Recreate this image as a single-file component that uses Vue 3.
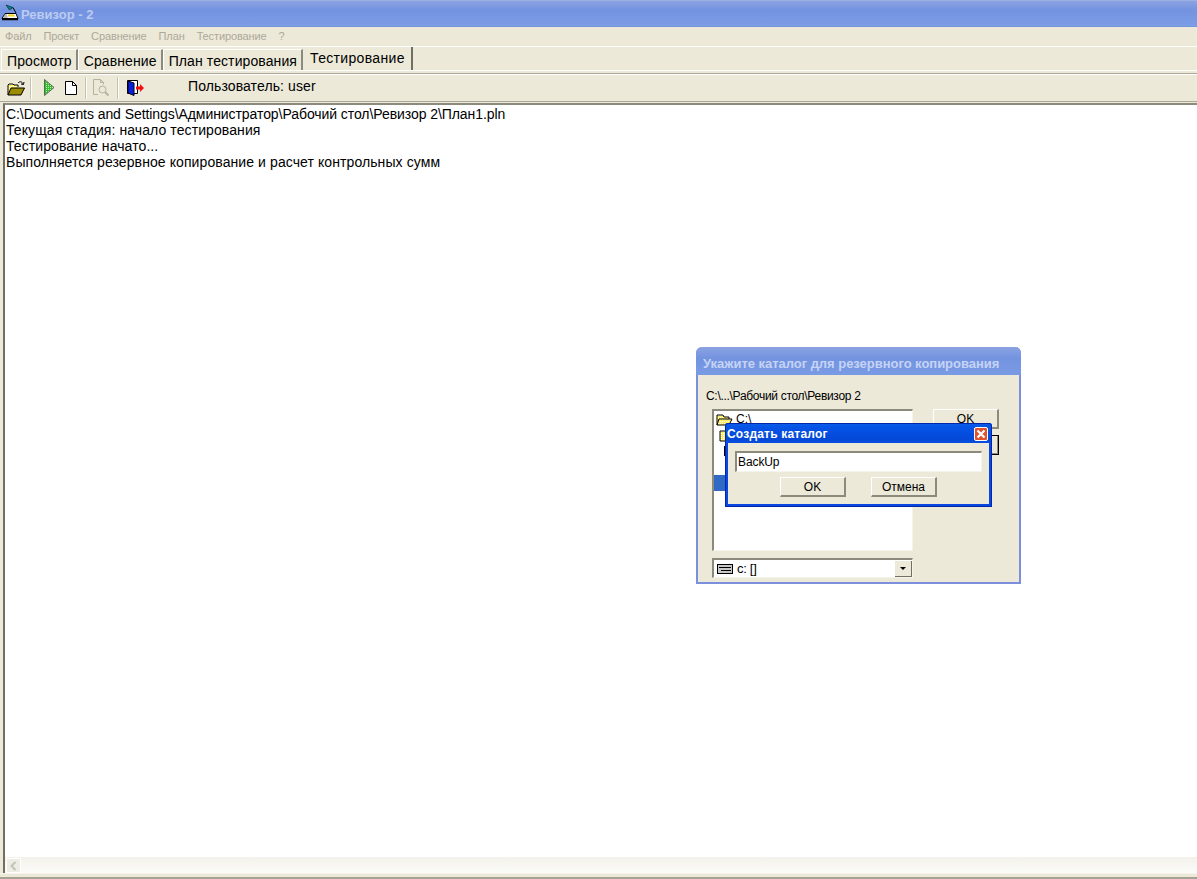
<script setup>
const menus = ['Файл', 'Проект', 'Сравнение', 'План', 'Тестирование', '?']
const tabs = ['Просмотр', 'Сравнение', 'План тестирования']
const lines = [
  'C:\\Documents and Settings\\Администратор\\Рабочий стол\\Ревизор 2\\План1.pln',
  'Текущая стадия: начало тестирования',
  'Тестирование начато...',
  'Выполняется резервное копирование и расчет контрольных сумм',
]
</script>

<template>
  <div class="app">
    <header class="titlebar">
      <svg class="app-icon" width="18" height="18" viewBox="0 0 18 18">
        <path d="M5 1l7 2.500-3.500 2.500z" fill="#0a8080" stroke="#033" stroke-width=".7"/>
        <path d="M12 3.500l3 5.500" stroke="#000" stroke-width="1" fill="none"/>
        <path d="M4 9.500h11l2 5H1z" fill="#fff" stroke="#000"/>
        <path d="M7 10.500h6l1 2H7z" fill="#f0d020"/>
        <path d="M3 11h3M2.500 13h4" stroke="#777"/>
        <path d="M1 15.500h16" stroke="#000" stroke-width="1.500"/>
      </svg>
      <span class="title-text">Ревизор - 2</span>
    </header>

    <nav class="menubar">
      <span v-for="m in menus" :key="m" class="menu-item">{{ m }}</span>
    </nav>

    <div class="tabstrip">
      <div v-for="t in tabs" :key="t" class="tab">{{ t }}</div>
      <div class="tab tab-active">Тестирование</div>
    </div>

    <div class="toolbar">
      <svg class="tool tool-open" width="18" height="16" viewBox="0 0 18 16">
        <defs>
          <pattern id="dy" width="2" height="2" patternUnits="userSpaceOnUse">
            <rect width="2" height="2" fill="#fff060"/><rect width="1" height="1" fill="#fff"/>
          </pattern>
        </defs>
        <path d="M1 15V5l1-1h4l1 1h4v2" fill="url(#dy)" stroke="#000"/>
        <path d="M1 15l3-7h13.500l-3.500 7z" fill="#9c8c00" stroke="#000"/>
        <path d="M11 3c2-2 4-1.500 5 1M16.500 4.500l-2.500-.5M16.500 4.500l.5-2.500" fill="none" stroke="#000"/>
      </svg>
      <span class="sep sep-a"></span>
      <svg class="tool tool-play" width="11" height="17" viewBox="0 0 11 17">
        <defs>
          <pattern id="dg" width="2" height="2" patternUnits="userSpaceOnUse">
            <rect width="2" height="2" fill="#30c030"/><rect width="1" height="1" fill="#d0f0b0"/>
          </pattern>
        </defs>
        <path d="M.5.500l9.500 8-9.500 8z" fill="url(#dg)" stroke="#586858"/>
      </svg>
      <svg class="tool tool-new" width="12" height="14" viewBox="0 0 12 14">
        <path d="M.5.500h7l4 4v9H.5z" fill="#fff" stroke="#000"/>
        <path d="M7.500.500v4h4" fill="none" stroke="#000"/>
      </svg>
      <span class="sep sep-b"></span>
      <svg class="tool tool-find" width="17" height="17" viewBox="0 0 17 17">
        <path d="M5 15.500H.5V.500h7l3 3v2M7.500.500v3h3" fill="none" stroke="#b5b29e"/>
        <circle cx="9.500" cy="10.500" r="3.500" fill="#ece9d8" stroke="#b5b29e"/>
        <path d="M12 13l3.500 3.500" stroke="#b5b29e" stroke-width="2"/>
      </svg>
      <span class="sep sep-c"></span>
      <svg class="tool tool-exit" width="17" height="16" viewBox="0 0 17 16">
        <path d="M.5.500h10v13H.5z" fill="#fff" stroke="#000"/>
        <path d="M1 1l6 2v12.500l-6-2.500z" fill="#0a1ee0" stroke="#000"/>
        <path d="M9 6.500h4V4l4 4-4 4V9.500H9z" fill="#f01010"/>
      </svg>
      <span class="user-label">Пользователь: user</span>
    </div>

    <main class="log">
      <div v-for="l in lines" :key="l" class="log-line">{{ l }}</div>
    </main>

    <div class="hscroll">
      <div class="scroll-btn">
        <svg width="7" height="10" viewBox="0 0 7 10"><path d="M5.500 1l-4 4 4 4" fill="none" stroke="#c4c3b8" stroke-width="2"/></svg>
      </div>
    </div>
    <div class="bottom-edge"></div>

    <section class="dlg-backup">
      <div class="backup-title">Укажите каталог для резервного копирования</div>
      <div class="backup-body">
        <div class="path-label">C:\...\Рабочий стол\Ревизор 2</div>
        <div class="backup-main">
          <div class="left-col">
            <div class="tree">
              <div class="tree-row tree-row-root">
                <svg width="17" height="13" viewBox="0 0 17 13"><path d="M1 12V2h6l1 2h5v2M1 12l2-6h13l-3 6z" fill="url(#dy)" stroke="#000"/></svg>
                <span>C:\</span>
              </div>
              <div class="tree-row tree-row-sub">
                <svg width="14" height="13" viewBox="0 0 14 13"><path d="M1 12V2h6l1 2h5v8z" fill="url(#dy)" stroke="#000"/></svg>
              </div>
              <div class="tree-row tree-row-third"><span class="tick"></span></div>
              <div class="tree-sel"></div>
            </div>
            <div class="combo">
              <svg width="16" height="10" viewBox="0 0 16 10"><rect x=".5" y=".5" width="15" height="9" fill="#c8c8c8" stroke="#000"/><path d="M2 3.500h12M4 6.500h10" stroke="#000"/></svg>
              <span class="combo-text">c: []</span>
              <span class="combo-btn"><i class="arrow"></i></span>
            </div>
          </div>
          <div class="right-col">
            <div class="btn3d btn-ok-back">OK</div>
            <div class="btn3d btn-cancel-back"></div>
          </div>
        </div>
      </div>
    </section>

    <section class="dlg-create">
      <div class="create-title">
        <span>Создать каталог</span>
        <span class="close-x">
          <svg width="10" height="10" viewBox="0 0 10 10"><path d="M1.500 1.500l7 7M8.500 1.500l-7 7" stroke="#fff" stroke-width="2.200"/></svg>
        </span>
      </div>
      <div class="create-body">
        <div class="create-input">BackUp</div>
        <div class="create-actions">
          <div class="btn3d btn-dlg">OK</div>
          <div class="btn3d btn-dlg">Отмена</div>
        </div>
      </div>
    </section>
  </div>
</template>

<style>
html, body { margin: 0; padding: 0; background: #ece9d8; overflow: hidden; }
</style>

<style scoped>
.app {
  position: relative;
  width: 1197px;
  height: 879px;
  display: flex;
  flex-direction: column;
  overflow: hidden;
  background: #ece9d8;
  font-family: "Liberation Sans", Arial, sans-serif;
  color: #000;
}
.titlebar {
  height: 27px;
  box-sizing: border-box;
  flex: none;
  display: flex;
  align-items: center;
  padding: 0 0 0 1px;
  border-top: 1px solid #9db0e4;
  background: linear-gradient(to bottom, #8ba2e2 0%, #7393e0 35%, #7a9be4 85%, #7d9fe6 95%, #6f8cd8 100%);
}
.app-icon { flex: none; margin-right: 2px; margin-top: -2px; }
.title-text {
  font-weight: 700;
  font-size: 13px;
  color: #bccbf3;
}
.menubar {
  height: 19px;
  flex: none;
  display: flex;
  align-items: center;
  padding: 0 0 1px 5px;
  gap: 12px;
  font-size: 11px;
  letter-spacing: -.12px;
  color: #aca899;
  box-sizing: border-box;
}
.tabstrip {
  height: 25px;
  flex: none;
  box-sizing: border-box;
  display: flex;
  align-items: flex-end;
  border-top: 1px solid #fff;
  padding: 0 0 0 1px;
  border-bottom: 1px solid #fff;
}
.tab {
  height: 21px;
  box-sizing: border-box;
  padding: 2px 4px 0 5px;
  font-size: 14px;
  line-height: 18px;
  border-top: 1px solid #fff;
  border-left: 1px solid #fff;
  border-right: 2px solid #8c8a7c;
  letter-spacing: .1px;
}
.tab-active {
  height: 23px;
  padding: 2px 6px 0 7px;
  border-left: none;
  border-top: none;
  border-right: 2px solid #716f64;
  letter-spacing: .33px;
  background: #ece9d8;
}
.toolbar {
  height: 29px;
  margin-top: 2px;
  flex: none;
  box-sizing: border-box;
  display: flex;
  align-items: center;
  border-top: 1px solid #aca899;
  border-bottom: 1px solid #aca899;
  box-shadow: inset 0 1px 0 #fff;
  padding: 0 0 0 7px;
}
.tool { flex: none; }
.sep { flex: none; width: 1px; height: 22px; background: #c5c2b0; border-right: 1px solid #fff; }
.sep-a { margin: 0 12px 0 5px; }
.tool-new { margin-left: 10px; }
.sep-b { margin: 0 6px 0 8px; }
.sep-c { margin: 0 8px 0 7px; }
.user-label { margin-left: 44px; font-size: 14px; letter-spacing: .1px; margin-top: -3px; }
.log {
  flex: 1;
  min-height: 0;
  box-sizing: border-box;
  margin: 1px 0 0 3px;
  padding: 1px 0 0 1px;
  background: #fff;
  border-left: 2px solid #716f64;
  border-top: 2px solid #8c8a7c;
  font-size: 14px;
  letter-spacing: .09px;
  line-height: 16px;
}
.log-line:first-child { letter-spacing: -.07px; }
.hscroll {
  height: 16px;
  flex: none;
  margin-left: 3px;
  background: linear-gradient(to bottom, #f3f1ea, #fbfbf9);
  display: flex;
  border-left: 2px solid #716f64;
}
.scroll-btn {
  width: 15px;
  height: 15px;
  margin: 1px 0 0 1px;
  box-sizing: border-box;
  border: 1px solid #fff;
  background: #eeede5;
  display: flex;
  align-items: center;
  justify-content: center;
}
.bottom-edge {
  height: 6px;
  flex: none;
  box-sizing: border-box;
  background: #ece9d8;
  border-top: 1px solid #f5f4e8;
  border-bottom: 2px solid #a4a294;
}
.dlg-backup {
  position: absolute;
  left: 696px;
  top: 347px;
  width: 325px;
  height: 237px;
  box-sizing: border-box;
  border: 2px solid #7c8fdc;
  border-top: none;
  border-radius: 6px 6px 0 0;
  background: #ece9d8;
  display: flex;
  flex-direction: column;
}
.backup-title {
  height: 28px;
  flex: none;
  margin: 0 -2px;
  padding: 4px 0 0 7px;
  display: flex;
  align-items: center;
  box-sizing: border-box;
  border-radius: 6px 6px 0 0;
  background: linear-gradient(to bottom, #8ba2e2, #7393e0 40%, #7a9be4);
  color: #c5d3f5;
  font-weight: 700;
  font-size: 13px;
  letter-spacing: -.03px;
  white-space: nowrap;
}
.backup-body { padding: 12px 0 0 8px; flex: 1; display: flex; flex-direction: column; }
.path-label { font-size: 12px; line-height: 18px; height: 17px; letter-spacing: -.3px; }
.backup-main { display: flex; margin-top: 5px; }
.left-col { width: 201px; flex: none; margin-left: 6px; }
.tree {
  position: relative;
  height: 142px;
  box-sizing: border-box;
  background: #fff;
  border: 2px solid #8c8a7c;
  border-right: 1px solid #f5f4ec;
  border-bottom: 1px solid #f5f4ec;
  font-size: 12px;
}
.tree-row { display: flex; align-items: center; gap: 3px; height: 16px; padding-left: 2px; }
.tree-row-sub { padding-left: 5px; }
.tree-row-third { padding-left: 10px; }
.tick { width: 3px; height: 10px; background: #000; }
.tree-sel { position: absolute; left: 0; top: 64px; width: 17px; height: 16px; background: #316ac5; }
.combo {
  margin-top: 7px;
  height: 20px;
  box-sizing: border-box;
  display: flex;
  align-items: center;
  background: #fff;
  border: 2px solid #8c8a7c;
  border-right: 1px solid #f5f4ec;
  border-bottom: 1px solid #f5f4ec;
  padding-left: 3px;
  font-size: 13px;
}
.combo-text { margin-left: 4px; flex: 1; letter-spacing: -.3px; }
.combo-btn {
  width: 17px;
  height: 16px;
  box-sizing: border-box;
  background: #ece9d8;
  border-right: 1px solid #716f64;
  border-bottom: 1px solid #716f64;
  display: flex;
  align-items: center;
  justify-content: center;
}
.arrow { width: 0; height: 0; border: 3px solid transparent; border-top: 3px solid #000; border-bottom: none; }
.right-col { margin-left: 20px; display: flex; flex-direction: column; gap: 6px; }
.btn3d {
  box-sizing: border-box;
  width: 66px;
  height: 20px;
  background: #ece9d8;
  border-top: 1px solid #fff;
  border-left: 1px solid #fff;
  border-right: 2px solid #8c8a7c;
  border-bottom: 2px solid #8c8a7c;
  display: flex;
  align-items: center;
  justify-content: center;
  font-size: 12px;
}
.btn-cancel-back { outline: 1px solid #000; outline-offset: -1px; }
.dlg-create {
  position: absolute;
  left: 725px;
  top: 423px;
  width: 267px;
  height: 84px;
  box-sizing: border-box;
  border: 3px solid #0a46e0;
  border-top: none;
  border-radius: 3px 3px 0 0;
  background: #ece9d8;
  display: flex;
  flex-direction: column;
  outline: 1px solid #0028a8;
  outline-offset: -1px;
}
.create-title {
  height: 20px;
  flex: none;
  box-sizing: border-box;
  margin: 0 -3px;
  padding: 2px 4px 0 2px;
  display: flex;
  align-items: center;
  justify-content: space-between;
  border-radius: 3px 3px 0 0;
  background: linear-gradient(to bottom, #0a5de8, #0553e6 25%, #0448d8 80%, #0a4ee0);
  color: #fff;
  font-weight: 700;
  font-size: 12px;
  letter-spacing: .2px;
}
.close-x {
  width: 14px;
  height: 14px;
  box-sizing: border-box;
  border: 1px solid #fff;
  border-radius: 2px;
  background: #e0532c;
  display: flex;
  align-items: center;
  justify-content: center;
}
.create-body { padding: 8px 7px 0 7px; flex: 1; }
.create-input {
  height: 21px;
  box-sizing: border-box;
  background: #fff;
  border: 2px solid #8c8a7c;
  border-right: 1px solid #f5f4ec;
  border-bottom: 1px solid #f5f4ec;
  padding: 0 0 0 1px;
  font-size: 12px;
  letter-spacing: -.1px;
  line-height: 18px;
}
.create-actions { display: flex; justify-content: center; gap: 25px; margin-top: 5px; }
.btn-dlg { width: 66px; height: 20px; }
</style>
